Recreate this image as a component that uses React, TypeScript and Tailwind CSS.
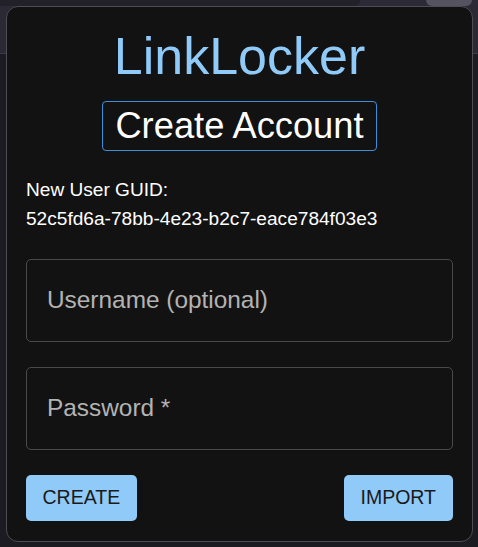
import React from "react";

const guid = "52c5fd6a-78bb-4e23-b2c7-eace784f03e3";

const Field = ({ placeholder, type }: { placeholder: string; type: string }) => {
  return (
    <div className="flex h-[83px] items-center rounded-[5px] border border-[#4a4a4a] px-[20px]">
      <input
        type={type}
        placeholder={placeholder}
        className="w-full bg-transparent text-[24.4px] text-white outline-none placeholder:text-[#b3b3b3]"
      />
    </div>
  );
};

const App = () => {
  return (
    <div className="h-[547px] w-[478px] overflow-hidden bg-[linear-gradient(to_bottom,#2a2934_0,#2a2934_53px,#3c3b46_53px,#3c3b46_54px,#1c1b22_54px)] font-['Liberation_Sans',Arial,sans-serif]">
      {/* strip of the page behind the popup */}
      <div className="flex h-[6px]">
        <div className="w-[360px] rounded-br-[6px] bg-[#22212a]" />
        <div className="flex flex-1 justify-end bg-[#2c2a36] pr-[6px]">
          <div className="w-[46px] rounded-b-[8px] bg-[#55535f]" />
        </div>
      </div>

      <div className="ml-[6px] w-[467px] rounded-[12px] border border-[#4d4c57] bg-[#121212] px-[19px] pt-[23px] pb-[20px]">
        <h1 className="text-center text-[52px] leading-none text-[#90caf9]">LinkLocker</h1>

        <div className="mt-[19px] flex justify-center">
          <h2 className="flex h-[50px] items-center rounded-[4px] border border-[#3b8fd9] px-[12px] text-[36.3px] leading-none text-white">
            Create Account
          </h2>
        </div>

        <div className="mt-[24px] text-[19.1px] leading-[29px] text-white">
          <p>New User GUID:</p>
          <p>{guid}</p>
        </div>

        <div className="mt-[26px] flex flex-col gap-[25px]">
          <Field placeholder="Username (optional)" type="text" />
          <Field placeholder="Password *" type="password" />
        </div>

        <div className="mt-[25px] flex justify-between">
          <button className="flex h-[46px] items-center rounded-[5px] bg-[#90caf9] px-[16.5px] text-[19.5px] text-[#1a1a1a]">
            CREATE
          </button>
          <button className="flex h-[46px] items-center rounded-[5px] bg-[#90caf9] px-[17px] text-[19.5px] text-[#1a1a1a]">
            IMPORT
          </button>
        </div>
      </div>
    </div>
  );
};

export default App;
